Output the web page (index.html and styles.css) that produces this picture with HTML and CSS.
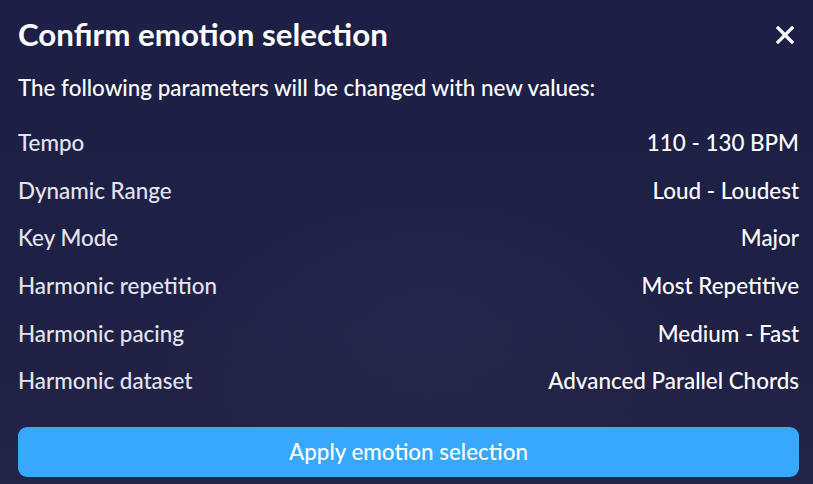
FILE: index.html
```html
<!DOCTYPE html>
<html lang="en">
<head>
<meta charset="utf-8">
<title>Confirm emotion selection</title>
<link rel="stylesheet" href="styles.css">
</head>
<body>
<div class="dialog">
  <header class="dialog-header">
    <h1 class="dialog-title">Confirm emotion selection</h1>
    <button class="close-btn" aria-label="Close">
      <svg width="18" height="18" viewBox="0 0 18 18"><path d="M2 2 L16 16 M16 2 L2 16" stroke="#fff" stroke-width="3.2" stroke-linecap="square"/></svg>
    </button>
  </header>
  <p class="dialog-intro">The following parameters will be changed with new values:</p>
  <ul class="param-list">
    <li class="param-row"><span class="param-label">Tempo</span><span class="param-value">110 - 130 BPM</span></li>
    <li class="param-row"><span class="param-label">Dynamic Range</span><span class="param-value">Loud - Loudest</span></li>
    <li class="param-row"><span class="param-label">Key Mode</span><span class="param-value">Major</span></li>
    <li class="param-row"><span class="param-label">Harmonic repetition</span><span class="param-value">Most Repetitive</span></li>
    <li class="param-row"><span class="param-label">Harmonic pacing</span><span class="param-value">Medium - Fast</span></li>
    <li class="param-row"><span class="param-label">Harmonic dataset</span><span class="param-value">Advanced Parallel Chords</span></li>
  </ul>
  <button class="apply-btn">Apply emotion selection</button>
</div>
</body>
</html>
```
FILE: styles.css
```css
html, body {
  margin: 0;
  padding: 0;
  width: 813px;
  height: 484px;
  overflow: hidden;
}
body {
  font-family: Lato, "Open Sans", sans-serif;
  background: #1f1f45;
}
.dialog {
  box-sizing: border-box;
  width: 813px;
  height: 484px;
  padding: 14px 14px 0 18px;
  background:
    radial-gradient(ellipse 420px 240px at 430px 320px, rgba(55, 57, 95, 0.22), rgba(55, 57, 95, 0) 70%),
    linear-gradient(180deg, #1e1f46 0%, #1f2045 60%, #222346 100%);
  color: #fff;
  display: flex;
  flex-direction: column;
}
.dialog-header {
  display: flex;
  align-items: center;
  justify-content: space-between;
  height: 40px;
}
.dialog-title {
  margin: 0;
  font-size: 31.3px;
  font-weight: 700;
  color: #fff;
}
.close-btn {
  background: none;
  border: 0;
  padding: 0;
  margin-right: 5px;
  margin-top: 2px;
  display: flex;
  cursor: pointer;
}
.dialog-intro {
  margin: 20px 0 0;
  font-size: 22.4px;
  font-weight: 500;
  color: #fff;
  line-height: 27px;
}
.param-list {
  list-style: none;
  margin: 18px 0 0;
  padding: 0;
  display: flex;
  flex-direction: column;
}
.param-row {
  display: flex;
  justify-content: space-between;
  align-items: center;
  height: 47.6px;
  font-size: 22.4px;
  font-weight: 500;
}
.param-label {
  color: #e4e4ee;
}
.param-value {
  color: #fff;
}
.apply-btn {
  margin-top: 22px;
  height: 50px;
  border: 0;
  border-radius: 9px;
  background: #38a8fe;
  color: #fff;
  font-family: Lato, "Open Sans", sans-serif;
  font-size: 22.4px;
  font-weight: 500;
  cursor: pointer;
}
```
